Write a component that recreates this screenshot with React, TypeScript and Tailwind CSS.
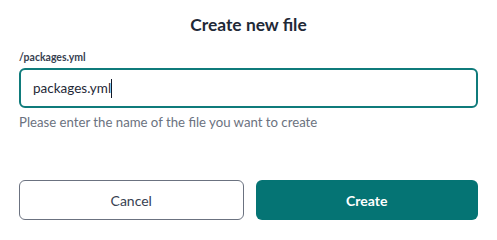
export default function App() {
  return (
    <div className="w-[497px] h-[231px] bg-white px-[19px] pt-[13px]" style={{ fontFamily: '"Lato", "Noto Sans", sans-serif' }}>
      <h1 className="text-center text-[17.4px] leading-[24px] font-bold text-[#1f2937]">Create new file</h1>
      <div className="mt-[13px] text-[10.5px] leading-[14px] font-bold text-[#374151]">/packages.yml</div>
      <div className="mt-[4px] h-[40px] rounded-[6px] border-2 border-[#0f7b7b] flex items-center pl-[12px]">
        <span className="text-[13.5px] text-[#1f2937]">packages.yml</span>
        <span className="w-px h-[19px] bg-[#111827]"></span>
      </div>
      <div className="mt-[5px] text-[13.2px] leading-[18px] text-[#6b7280]">Please enter the name of the file you want to create</div>
      <div className="mt-[49px] flex gap-[12px]">
        <button className="flex-1 h-[40px] rounded-[6px] border border-[#6b7280] bg-white text-[14px] text-[#374151]">Cancel</button>
        <button className="flex-1 h-[40px] rounded-[6px] bg-[#057474] text-[14px] font-bold text-white">Create</button>
      </div>
    </div>
  );
}
